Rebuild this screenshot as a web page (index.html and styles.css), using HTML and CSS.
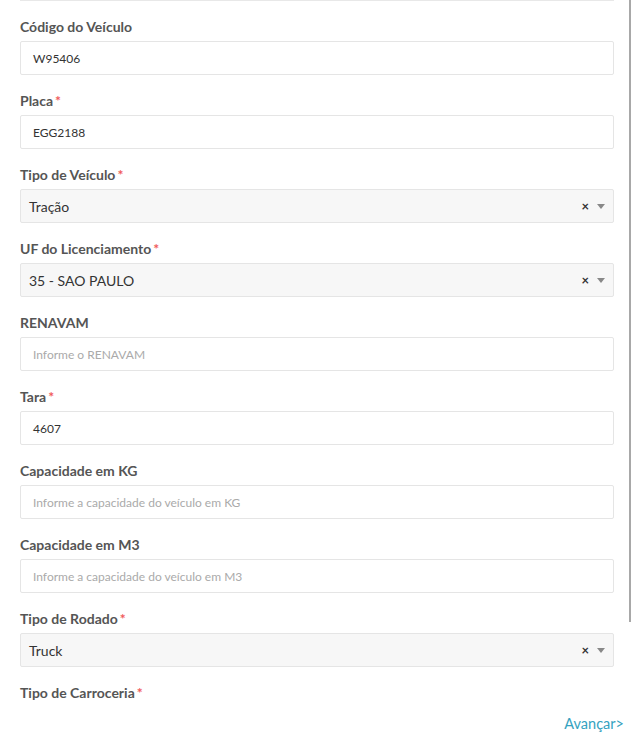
FILE: index.html
```html
<!DOCTYPE html>
<html lang="pt-BR">
<head>
<meta charset="utf-8">
<title>Veículo</title>
<link rel="stylesheet" href="styles.css">
</head>
<body>
<div class="scrollbar"></div>
<form class="form">
  <div class="prev-edge"></div>

  <div class="field">
    <label class="label">Código do Veículo</label>
    <div class="input">W95406</div>
  </div>

  <div class="field">
    <label class="label">Placa<span class="req">*</span></label>
    <div class="input">EGG2188</div>
  </div>

  <div class="field">
    <label class="label">Tipo de Veículo<span class="req">*</span></label>
    <div class="select">
      <span class="select-value">Tração</span>
      <span class="select-clear">×</span>
      <span class="select-arrow"></span>
    </div>
  </div>

  <div class="field">
    <label class="label">UF do Licenciamento<span class="req">*</span></label>
    <div class="select">
      <span class="select-value">35 - SAO PAULO</span>
      <span class="select-clear">×</span>
      <span class="select-arrow"></span>
    </div>
  </div>

  <div class="field">
    <label class="label">RENAVAM</label>
    <div class="input placeholder">Informe o RENAVAM</div>
  </div>

  <div class="field">
    <label class="label">Tara<span class="req">*</span></label>
    <div class="input">4607</div>
  </div>

  <div class="field">
    <label class="label">Capacidade em KG</label>
    <div class="input placeholder">Informe a capacidade do veículo em KG</div>
  </div>

  <div class="field">
    <label class="label">Capacidade em M3</label>
    <div class="input placeholder">Informe a capacidade do veículo em M3</div>
  </div>

  <div class="field">
    <label class="label">Tipo de Rodado<span class="req">*</span></label>
    <div class="select">
      <span class="select-value">Truck</span>
      <span class="select-clear">×</span>
      <span class="select-arrow"></span>
    </div>
  </div>

  <div class="field last">
    <label class="label">Tipo de Carroceria<span class="req">*</span></label>
  </div>

  <div class="actions">
    <a class="next" href="#">Avançar&gt;</a>
  </div>
</form>
</body>
</html>
```

FILE: styles.css
```css
* { box-sizing: border-box; }

html, body {
  margin: 0;
  padding: 0;
  background: #fff;
}

body {
  font-family: Lato, "Open Sans", Arial, sans-serif;
  color: #333;
  width: 634px;
  height: 753px;
  overflow: hidden;
  position: relative;
}

.scrollbar {
  position: absolute;
  top: 0;
  left: 629px;
  width: 2px;
  height: 622px;
  background: #a8a8a8;
}

.form {
  padding: 0 20px 0 20px;
}

.prev-edge {
  height: 1px;
  border-bottom: 1px solid #e8e8e8;
  margin-bottom: 17px;
}

.field {
  display: flex;
  flex-direction: column;
  margin-bottom: 17px;
}

.label {
  font-weight: 700;
  font-size: 14px;
  line-height: 18px;
  height: 18px;
  color: #555;
  margin-bottom: 5px;
}

.req {
  color: #f05a5a;
  margin-left: 2px;
}

.input {
  height: 34px;
  border: 1px solid #e5e5e5;
  border-radius: 2px;
  background: #fff;
  padding: 0 12px;
  display: flex;
  align-items: center;
  font-size: 12px;
  color: #333;
}

.input.placeholder {
  color: #aaa;
}

.select {
  height: 34px;
  border: 1px solid #e5e5e5;
  border-radius: 2px;
  background: #f7f7f7;
  padding: 0 8px 0 8px;
  display: flex;
  align-items: center;
  font-size: 14px;
  color: #333;
}

.select-value {
  flex: 1;
}

.select-clear {
  font-size: 13px;
  color: #333;
  font-weight: 700;
  margin-right: 8px;
}

.select-arrow {
  width: 0;
  height: 0;
  border-left: 4.5px solid transparent;
  border-right: 4.5px solid transparent;
  border-top: 5px solid #888;
}

.field.last {
  margin-bottom: 0;
}

.actions {
  display: flex;
  justify-content: flex-end;
  margin-top: 8px;
  margin-right: -10px;
}

.next {
  color: #35a2c0;
  text-decoration: none;
  font-size: 14.5px;
  line-height: 18px;
}
```
